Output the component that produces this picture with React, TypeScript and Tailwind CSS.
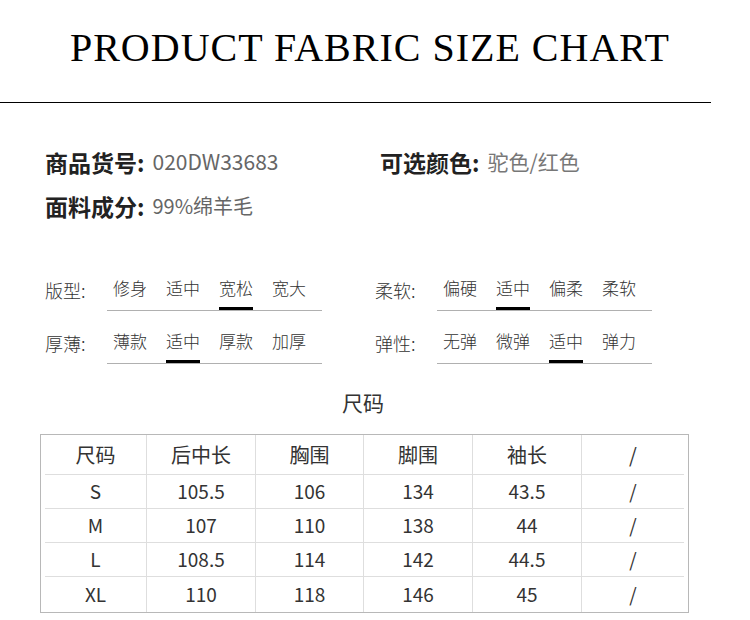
const attrsLeft = [
  { label: '版型:', options: ['修身', '适中', '宽松', '宽大'], active: 2 },
  { label: '厚薄:', options: ['薄款', '适中', '厚款', '加厚'], active: 1 },
];

const attrsRight = [
  { label: '柔软:', options: ['偏硬', '适中', '偏柔', '柔软'], active: 1 },
  { label: '弹性:', options: ['无弹', '微弹', '适中', '弹力'], active: 2 },
];

const header = ['尺码', '后中长', '胸围', '脚围', '袖长', '/'];

const rows = [
  ['S', '105.5', '106', '134', '43.5', '/'],
  ['M', '107', '110', '138', '44', '/'],
  ['L', '108.5', '114', '142', '44.5', '/'],
  ['XL', '110', '118', '146', '45', '/'],
];

function AttrRow({ label, options, active }: { label: string; options: string[]; active: number }) {
  return (
    <div className="flex items-end h-[53px]">
      <div className="w-[62px] text-[18px] leading-[26px] text-[#333] font-light pb-[8px]">{label}</div>
      <div className="w-[215px] border-b border-[#b0b0b0] flex gap-[19px] pl-[6px]">
        {options.map((o, i) => (
          <div key={o + i} className="flex flex-col">
            <span className="text-[17px] leading-[26px] text-[#333] font-light whitespace-nowrap">{o}</span>
            <span className={`mt-[6px] h-[3px] ${i === active ? 'bg-black' : 'bg-transparent'}`} />
          </div>
        ))}
      </div>
    </div>
  );
}

export default function App() {
  return (
    <div
      className="w-[750px] h-[620px] bg-white overflow-hidden"
      style={{ fontFamily: '"Noto Sans CJK SC", "Noto Sans", sans-serif' }}
    >
      <h1
        className="pt-[28px] pr-[10px] text-center text-[40px] leading-[40px] tracking-[1px] text-black"
        style={{ fontFamily: '"Liberation Serif", "DejaVu Serif", serif' }}
      >
        PRODUCT FABRIC SIZE CHART
      </h1>
      <div className="mt-[34px] w-[711px] h-px bg-black" />

      {/* product info */}
      <div className="mt-[37px] pl-[45px]">
        <div className="flex h-[44px] items-center">
          <div className="w-[335px] flex items-center">
            <span className="text-[23px] font-bold text-[#222]">商品货号:</span>
            <span className="ml-[8px] text-[21px] text-[#666]">020DW33683</span>
          </div>
          <div className="flex items-center">
            <span className="text-[23px] font-bold text-[#222]">可选颜色:</span>
            <span className="ml-[8px] text-[21px] text-[#777]">驼色/红色</span>
          </div>
        </div>
        <div className="flex h-[44px] items-center">
          <span className="text-[23px] font-bold text-[#222]">面料成分:</span>
          <span className="ml-[8px] text-[20px] text-[#666]">99%绵羊毛</span>
        </div>
      </div>

      {/* fabric attributes */}
      <div className="mt-[30px] pl-[45px] flex">
        <div className="w-[330px]">
          {attrsLeft.map(a => <AttrRow key={a.label} {...a} />)}
        </div>
        <div>
          {attrsRight.map(a => <AttrRow key={a.label} {...a} />)}
        </div>
      </div>

      <div className="mt-[23px] text-center pr-[24px] text-[21px] leading-[30px] text-[#333]">尺码</div>

      {/* size table */}
      <div className="mt-[17px] ml-[40px] w-[649px] border border-[#b8b8b8] px-[4px]">
        <div className="grid grid-cols-[102px_109px_108px_109px_109px_1fr] h-[40px] border-b border-[#dedede]">
          {header.map((h, i) => (
            <div
              key={h}
              className={`flex items-center justify-center text-[20px] text-[#333] ${i < 5 ? 'border-r border-[#dedede]' : ''}`}
            >
              {h}
            </div>
          ))}
        </div>
        {rows.map((r, ri) => (
          <div
            key={r[0]}
            className={`grid grid-cols-[102px_109px_108px_109px_109px_1fr] ${ri < rows.length - 1 ? 'h-[34px] border-b border-[#dedede]' : 'h-[35px]'}`}
          >
            {r.map((c, i) => (
              <div
                key={i}
                className={`flex items-center justify-center text-[19px] text-[#333] ${i < 5 ? 'border-r border-[#dedede]' : ''}`}
              >
                {c}
              </div>
            ))}
          </div>
        ))}
      </div>
    </div>
  );
}
